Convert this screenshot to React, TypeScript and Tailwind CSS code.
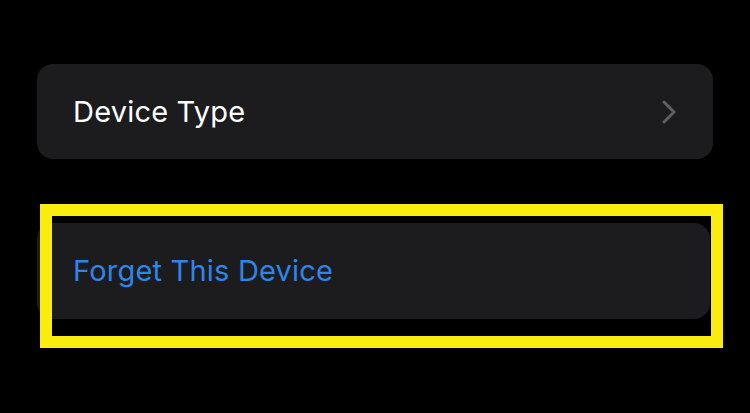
export default function App() {
  return (
    <div className="relative h-[413px] w-[750px] overflow-hidden bg-black font-['Inter','Liberation_Sans',sans-serif]">
      <div className="flex flex-col gap-[64px] pl-[37px] pr-[37px] pt-[64px]">
        <div className="flex h-[95px] items-center justify-between rounded-[16px] bg-[#1c1c1e] pl-[36px] pr-[36px]">
          <span className="text-[29px] tracking-[0.2px] text-white">Device Type</span>
          <svg width="16" height="24" viewBox="0 0 16 24" fill="none">
            <polyline
              points="3,2 13,12 3,22"
              stroke="#5f5f64"
              strokeWidth="3"
              strokeLinecap="round"
              strokeLinejoin="round"
            />
          </svg>
        </div>
        <div className="mr-[3px] flex h-[96px] items-center rounded-[16px] bg-[#1c1c1e] pl-[36px]">
          <span className="text-[29px] tracking-[0.2px] text-[#2f84ea]">Forget This Device</span>
        </div>
      </div>
      {/* highlight annotation */}
      <div className="pointer-events-none absolute left-[40px] top-[204px] h-[144px] w-[683px] border-[12px] border-[#fbec0f]" />
    </div>
  );
}
